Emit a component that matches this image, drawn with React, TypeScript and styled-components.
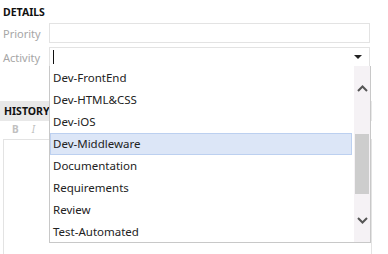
import React from 'react'
import styled, { createGlobalStyle } from 'styled-components'

const GlobalStyle = createGlobalStyle`
  html, body {
    margin: 0;
    padding: 0;
    background: #ffffff;
  }
  body {
    font-family: "Noto Sans", "Open Sans", sans-serif;
    color: #222222;
    overflow: hidden;
  }
`

const Page = styled.div`
  position: relative;
  width: 388px;
  height: 254px;
  overflow: hidden;
`

const Details = styled.div`
  padding: 0 18px 0 3px;
`

const SectionTitle = styled.div`
  height: 23px;
  line-height: 24px;
  font-size: 10.5px;
  font-weight: 700;
  color: #111111;
`

const FieldRow = styled.div`
  display: flex;
  align-items: center;
  height: 20px;
  margin-bottom: 4px;
`

const Label = styled.div`
  flex-shrink: 0;
  width: 46px;
  font-size: 11px;
  color: #a6a6a6;
`

const Input = styled.div<{ $focused?: boolean }>`
  position: relative;
  flex: 1;
  height: 18px;
  border: 1px solid #e3e3e3;
  ${({ $focused }) => $focused && 'border-bottom-color: #c8c8c8;'}
`

const Caret = styled.div`
  position: absolute;
  left: 3px;
  top: 2px;
  width: 1px;
  height: 14px;
  background: #111111;
`

const DropArrow = styled.div`
  position: absolute;
  right: 7px;
  top: 7px;
  width: 0;
  height: 0;
  border-left: 4px solid transparent;
  border-right: 4px solid transparent;
  border-top: 4px solid #222222;
`

const HistoryHeader = styled.div`
  margin-top: 34px;
  width: 372px;
  height: 20px;
  background: #e8e8e8;
  font-size: 10.5px;
  font-weight: 700;
  line-height: 21px;
  padding-left: 4px;
  box-sizing: border-box;
  color: #111111;
`

const Toolbar = styled.div`
  display: flex;
  gap: 13px;
  height: 18px;
  padding-left: 12px;
  font-size: 10px;
  line-height: 17px;
  color: #c0c0c0;
`

const ToolButton = styled.span<{ $italic?: boolean }>`
  font-weight: ${({ $italic }) => ($italic ? 400 : 700)};
  font-style: ${({ $italic }) => ($italic ? 'italic' : 'normal')};
`

const Editor = styled.div`
  margin-left: 3px;
  width: 367px;
  height: 140px;
  border: 1px solid #e3e3e3;
`

const Dropdown = styled.div`
  position: absolute;
  left: 49px;
  top: 66px;
  width: 320px;
  height: 176px;
  border: 1px solid #c8c8c8;
  border-top: none;
  background: #ffffff;
  display: flex;
`

const List = styled.div`
  flex: 1;
  padding-top: 1px;
  padding-right: 2px;
`

const Item = styled.div<{ $active?: boolean }>`
  height: 22px;
  box-sizing: border-box;
  padding-left: 2px;
  font-size: 11.5px;
  line-height: 20px;
  color: #222222;
  border: 1px solid ${({ $active }) => ($active ? '#bcd0f0' : 'transparent')};
  background: ${({ $active }) => ($active ? '#dce6f7' : 'transparent')};
`

const Scrollbar = styled.div`
  width: 16px;
  background: #f5f2f5;
  display: flex;
  flex-direction: column;
  align-items: center;
`

const ScrollButton = styled.div`
  height: 44px;
  width: 16px;
  display: flex;
  align-items: center;
  justify-content: center;
`

const Track = styled.div`
  flex: 1;
  width: 14px;
  padding-top: 24px;
`

const Thumb = styled.div`
  width: 14px;
  height: 60px;
  background: #cdcdcd;
`

const Chevron = ({ up }: { up?: boolean }) => (
  <svg width="11" height="7" viewBox="0 0 11 7">
    <path
      d={up ? 'M1 6 L5.5 1.5 L10 6' : 'M1 1 L5.5 5.5 L10 1'}
      fill="none"
      stroke="#555555"
      strokeWidth="2"
    />
  </svg>
)

const activities = [
  'Dev-FrontEnd',
  'Dev-HTML&CSS',
  'Dev-iOS',
  'Dev-Middleware',
  'Documentation',
  'Requirements',
  'Review',
  'Test-Automated',
]

export default function App() {
  return (
    <Page>
      <GlobalStyle />
      <Details>
        <SectionTitle>DETAILS</SectionTitle>
        <FieldRow>
          <Label>Priority</Label>
          <Input />
        </FieldRow>
        <FieldRow>
          <Label>Activity</Label>
          <Input $focused>
            <Caret />
            <DropArrow />
          </Input>
        </FieldRow>
      </Details>
      <HistoryHeader>HISTORY</HistoryHeader>
      <Toolbar>
        <ToolButton>B</ToolButton>
        <ToolButton $italic>I</ToolButton>
      </Toolbar>
      <Editor />
      <Dropdown>
        <List>
          {activities.map((a) => (
            <Item key={a} $active={a === 'Dev-Middleware'}>{a}</Item>
          ))}
        </List>
        <Scrollbar>
          <ScrollButton><Chevron up /></ScrollButton>
          <Track><Thumb /></Track>
          <ScrollButton><Chevron /></ScrollButton>
        </Scrollbar>
      </Dropdown>
    </Page>
  )
}
